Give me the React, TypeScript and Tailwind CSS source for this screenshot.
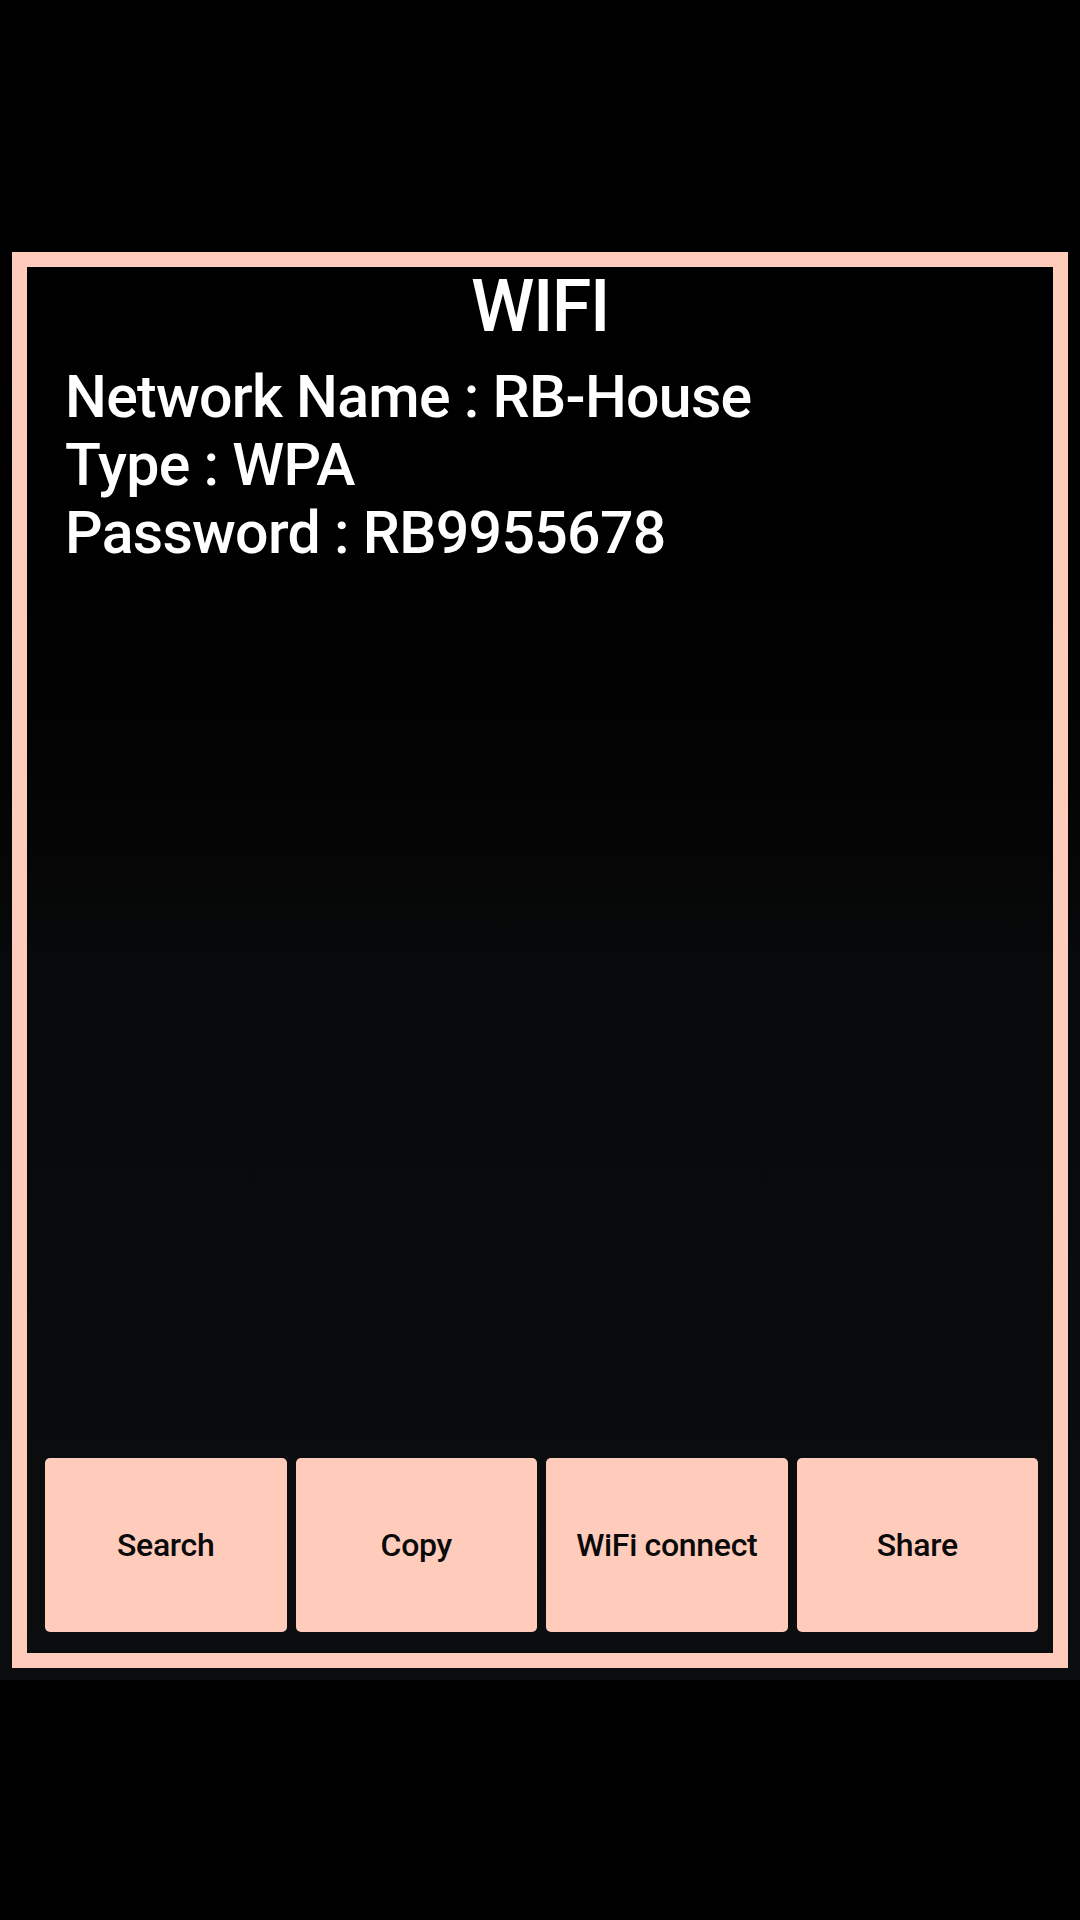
import * as React from 'react';

/**
 * WiFi QR result screen - shows network details with action buttons.
 */

interface WifiInfo {
  ssid: string;
  type: string;
  password: string;
}

const wifi: WifiInfo = { ssid: 'RB-House', type: 'WPA', password: 'RB9955678' };

const actions = ['Search', 'Copy', 'WiFi connect', 'Share'];

function ActionButton({ label }: { label: string }) {
  return (
    <button className="flex-1 h-[174px] rounded-[5px] bg-[#ffccbc] flex items-center justify-center text-[32px] font-medium tracking-[-0.01em] text-[#0a0a0a] leading-none">
      {label}
    </button>
  );
}

export default function App() {
  return (
    <div className="w-[1080px] h-[1920px] bg-black flex flex-col justify-center" style={{ fontFamily: 'Roboto, "Noto Sans", sans-serif' }}>
      <div className="h-[1440px] p-[12px] bg-gradient-to-b from-[#000000] via-[#08090a] to-[#0c0d0f]">
        <div className="h-full border-[15px] border-[#ffccbc] flex flex-col">
          <h1 className="mt-[-2px] text-center text-white text-[72px] leading-[84px] font-medium tracking-[-0.02em]">WIFI</h1>
          <div className="mt-[14px] pl-[38px] text-white text-[59px] leading-[68px] font-medium tracking-[-0.012em]">
            <p>Network Name : {wifi.ssid}</p>
            <p>Type : {wifi.type}</p>
            <p>Password : {wifi.password}</p>
          </div>
          <div className="flex-1" />
          <div className="flex gap-[9px] pl-[18px] pr-[15px] pb-[21px]">
            {actions.map((a) => (
              <ActionButton key={a} label={a} />
            ))}
          </div>
        </div>
      </div>
    </div>
  );
}
